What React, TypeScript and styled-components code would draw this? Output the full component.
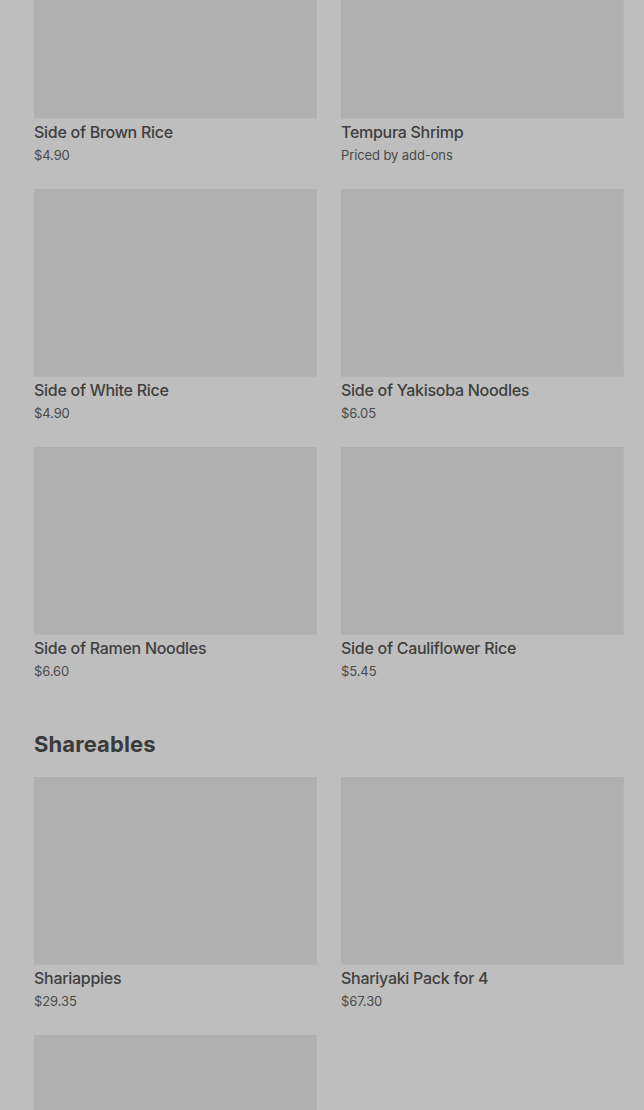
import React from "react";
import styled, { createGlobalStyle } from "styled-components";

type Item = { name: string; price: string };

const sides: Item[] = [
  { name: "Side of Brown Rice", price: "$4.90" },
  { name: "Tempura Shrimp", price: "Priced by add-ons" },
  { name: "Side of White Rice", price: "$4.90" },
  { name: "Side of Yakisoba Noodles", price: "$6.05" },
  { name: "Side of Ramen Noodles", price: "$6.60" },
  { name: "Side of Cauliflower Rice", price: "$5.45" },
];

const shareables: Item[] = [
  { name: "Shariappies", price: "$29.35" },
  { name: "Shariyaki Pack for 4", price: "$67.30" },
  { name: "", price: "" },
];

export default function App() {
  return (
    <>
      <GlobalStyle />
      <Page>
        <Grid>
          {sides.map((item) => (
            <Card key={item.name} item={item} />
          ))}
        </Grid>
        <SectionTitle>Shareables</SectionTitle>
        <Grid>
          {shareables.map((item, i) => (
            <Card key={i} item={item} />
          ))}
        </Grid>
      </Page>
    </>
  );
}

const Card = ({ item }: { item: Item }) => (
  <CardBox>
    <Thumb />
    {item.name && <Name>{item.name}</Name>}
    {item.price && <Price>{item.price}</Price>}
  </CardBox>
);

const GlobalStyle = createGlobalStyle`
  html, body {
    margin: 0;
    padding: 0;
    background: #bebebe;
    overflow: hidden;
  }
  body {
    font-family: Inter, "Noto Sans", sans-serif;
  }
`;

const Page = styled.div`
  margin-top: -69px;
  padding: 0 20px 0 34px;
  height: 1179px;
  overflow: hidden;
`;

const Grid = styled.div`
  display: grid;
  grid-template-columns: 283px 283px;
  column-gap: 24px;
  row-gap: 25px;
`;

const CardBox = styled.div`
  display: flex;
  flex-direction: column;
`;

const Thumb = styled.div`
  height: 188px;
  background: #b0b0b0;
  box-shadow: inset -1px -2px 0 #b3b3b3, inset 0 0 0 1px #afafaf;
`;

const Name = styled.div`
  margin-top: 3px;
  font-size: 16px;
  line-height: 20px;
  font-weight: 500;
  color: #3f3f3f;
  letter-spacing: -0.28px;
`;

const Price = styled.div`
  margin-top: 4px;
  font-size: 13px;
  line-height: 18px;
  color: #4a4a4a;
  letter-spacing: -0.1px;
`;

const SectionTitle = styled.h2`
  margin: 50px 0 19px;
  font-size: 22px;
  line-height: 28px;
  font-weight: 700;
  color: #3a3a3a;
  letter-spacing: 0.1px;
`;
